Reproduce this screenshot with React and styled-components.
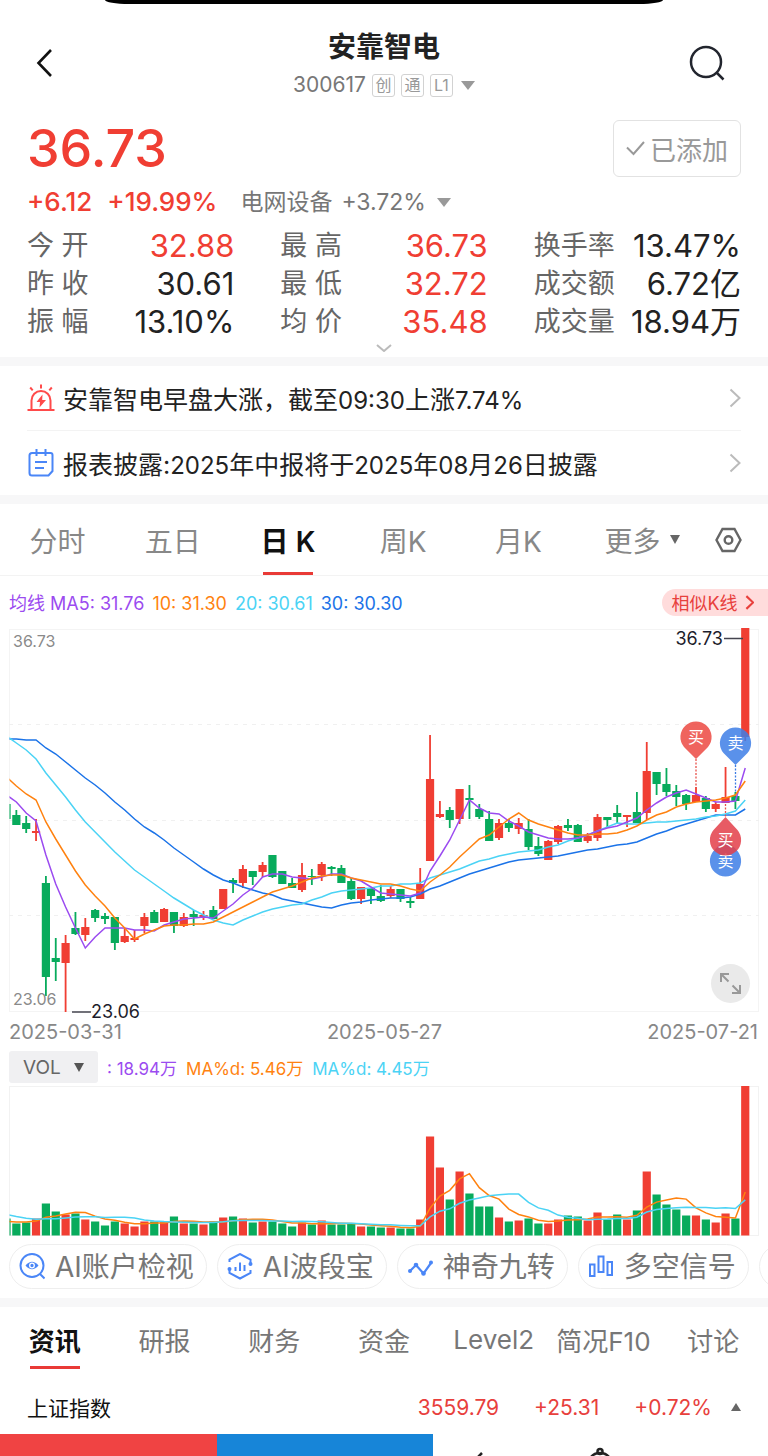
import { Fragment } from "react";
import styled, { createGlobalStyle } from "styled-components";

const RED = "#f03e33";
const GREEN = "#08ab5c";
const PURPLE = "#9b4bf0";
const ORANGE = "#ff8210";
const CYAN = "#4bd3f5";
const BLUE = "#1b73e8";

const GlobalStyle = createGlobalStyle`
    * {
        box-sizing: border-box;
    }
    body {
        margin: 0;
        background: #fff;
        color: #222;
        font-family: Inter, "Noto Sans CJK SC", sans-serif;
        overflow-x: hidden;
    }
    button, select {
        margin: 0;
        padding: 0;
        border: 0;
        background: none;
        color: inherit;
        font: inherit;
        cursor: pointer;
    }
    a {
        color: inherit;
        text-decoration: none;
    }
    svg {
        display: block;
        flex: none;
    }
`;

// [direction, high, body top, body bottom, low, volume]
const candles = [
    ["g", 176, 176, 191, 191, 17],
    ["g", 182, 187, 197, 197, 12],
    ["g", 188, 195, 201, 205, 13],
    ["r", 191, 203, 205, 213, 17],
    ["g", 248, 255, 349, 368, 32],
    ["g", 310, 330, 334, 353, 24],
    ["r", 307, 315, 335, 384, 21],
    ["g", 284, 300, 306, 307, 22],
    ["r", 290, 299, 307, 313, 16],
    ["g", 281, 282, 290, 294, 14],
    ["g", 285, 288, 291, 296, 10],
    ["g", 289, 289, 315, 322, 14],
    ["r", 300, 308, 314, 315, 12],
    ["r", 302, 310, 312, 314, 9],
    ["r", 285, 289, 298, 305, 14],
    ["g", 282, 284, 295, 295, 14],
    ["r", 280, 281, 294, 294, 14],
    ["g", 284, 284, 298, 305, 19],
    ["r", 285, 289, 298, 299, 12],
    ["g", 282, 286, 289, 298, 12],
    ["r", 283, 287, 289, 292, 11],
    ["g", 278, 282, 291, 291, 14],
    ["r", 261, 261, 281, 281, 18],
    ["g", 250, 252, 255, 265, 19],
    ["r", 237, 241, 255, 260, 17],
    ["g", 243, 243, 249, 257, 13],
    ["r", 234, 237, 244, 249, 14],
    ["g", 227, 227, 249, 250, 14],
    ["g", 243, 243, 256, 256, 12],
    ["g", 250, 255, 260, 260, 9],
    ["r", 235, 247, 262, 264, 13],
    ["g", 241, 248, 249, 257, 11],
    ["r", 234, 236, 247, 253, 15],
    ["g", 238, 239, 241, 248, 11],
    ["g", 237, 240, 255, 255, 11],
    ["g", 250, 253, 271, 272, 12],
    ["r", 259, 259, 271, 276, 9],
    ["g", 260, 260, 268, 276, 9],
    ["g", 257, 268, 273, 274, 8],
    ["r", 258, 261, 268, 270, 8],
    ["g", 261, 261, 271, 274, 7],
    ["g", 269, 273, 275, 280, 7],
    ["r", 240, 256, 271, 271, 16],
    ["r", 107, 151, 233, 233, 99],
    ["r", 173, 186, 189, 190, 68],
    ["g", 179, 182, 192, 200, 36],
    ["r", 161, 161, 191, 196, 64],
    ["g", 157, 170, 172, 191, 42],
    ["g", 176, 181, 189, 191, 29],
    ["g", 183, 191, 213, 213, 29],
    ["r", 191, 195, 210, 212, 18],
    ["g", 191, 195, 200, 204, 14],
    ["r", 190, 195, 201, 206, 15],
    ["g", 191, 201, 219, 222, 17],
    ["g", 209, 218, 226, 228, 12],
    ["r", 212, 213, 232, 232, 12],
    ["r", 197, 198, 214, 216, 16],
    ["g", 191, 197, 200, 203, 20],
    ["g", 196, 197, 214, 214, 19],
    ["r", 205, 208, 213, 215, 15],
    ["r", 186, 189, 210, 213, 23],
    ["g", 189, 189, 192, 199, 16],
    ["g", 177, 185, 189, 195, 21],
    ["r", 187, 187, 189, 199, 16],
    ["g", 164, 184, 195, 195, 25],
    ["r", 114, 143, 185, 192, 64],
    ["g", 144, 144, 156, 167, 41],
    ["g", 140, 156, 164, 168, 31],
    ["g", 157, 163, 169, 178, 26],
    ["g", 166, 167, 176, 182, 20],
    ["r", 159, 167, 174, 174, 20],
    ["g", 168, 170, 181, 184, 16],
    ["r", 174, 176, 181, 184, 13],
    ["r", 139, 169, 175, 175, 22],
    ["g", 164, 168, 173, 181, 17],
    ["r", 0, 0, 109, 113, 150]
];

const averages = [
    {
        color: BLUE,
        points: [111, 111, 112, 112, 120, 126, 134, 142, 150, 157, 165, 174, 182, 191, 199, 205, 212, 220, 227, 234, 241, 247, 252, 255, 259, 262, 265, 267, 271, 273, 275, 277, 279, 280, 277, 275, 274, 272, 271, 270, 270, 269, 266, 261, 258, 254, 250, 246, 243, 240, 237, 234, 232, 231, 230, 229, 228, 226, 224, 222, 221, 219, 217, 216, 214, 210, 206, 203, 199, 196, 193, 190, 187, 187, 187, 181]
    },
    {
        color: CYAN,
        points: [108, 115, 122, 131, 145, 157, 169, 182, 194, 204, 214, 224, 233, 242, 249, 256, 263, 270, 276, 282, 287, 292, 295, 297, 292, 288, 284, 281, 279, 277, 276, 272, 269, 265, 263, 262, 261, 260, 258, 258, 256, 256, 255, 250, 247, 244, 241, 237, 233, 231, 228, 226, 224, 223, 222, 219, 217, 213, 210, 207, 203, 199, 195, 196, 196, 195, 194, 194, 193, 192, 191, 189, 188, 186, 183, 172]
    },
    {
        color: PURPLE,
        points: [167, 174, 185, 193, 227, 256, 279, 300, 320, 309, 300, 300, 300, 302, 302, 303, 297, 294, 291, 290, 289, 290, 283, 276, 267, 260, 249, 246, 246, 249, 250, 251, 249, 246, 246, 250, 253, 259, 265, 266, 267, 268, 265, 243, 228, 212, 192, 172, 180, 185, 186, 193, 198, 204, 207, 210, 211, 211, 210, 207, 203, 200, 198, 194, 190, 182, 175, 169, 165, 162, 166, 170, 174, 174, 173, 140]
    },
    {
        color: ORANGE,
        points: [149, 158, 166, 172, 194, 211, 227, 243, 257, 268, 278, 290, 300, 311, 306, 302, 298, 297, 297, 296, 296, 294, 289, 284, 279, 274, 269, 264, 261, 258, 254, 250, 248, 247, 247, 250, 252, 254, 256, 256, 258, 261, 263, 254, 247, 239, 229, 220, 211, 207, 199, 191, 185, 192, 196, 199, 202, 205, 207, 207, 206, 206, 205, 202, 198, 192, 187, 184, 179, 176, 174, 173, 172, 170, 167, 153]
    }
];

// volumes before the visible range, needed by the moving averages
const earlierVolumes = [32, 30, 28, 26, 24, 14, 13, 13, 13];

const stats = [
    { label: "今 开", value: "32.88", up: true },
    { label: "最 高", value: "36.73", up: true },
    { label: "换手率", value: "13.47%" },
    { label: "昨 收", value: "30.61" },
    { label: "最 低", value: "32.72", up: true },
    { label: "成交额", value: "6.72亿" },
    { label: "振 幅", value: "13.10%" },
    { label: "均 价", value: "35.48", up: true },
    { label: "成交量", value: "18.94万" }
];

const periods = ["分时", "五日", "日 K", "周K", "月K"];
const sections = ["资讯", "研报", "财务", "资金", "Level2", "简况F10", "讨论"];

const xAt = i => -2.5 + i * 9.85;
const colorOf = dir => (dir === "r" ? RED : GREEN);
const toPoints = ys => ys.map((y, i) => `${xAt(i)},${y}`).join(" ");

function volumeAverage(size) {
    const all = [...earlierVolumes, ...candles.map(c => c[5])];
    return candles.map((c, i) => {
        const end = i + earlierVolumes.length + 1;
        const sum = all.slice(end - size, end).reduce((a, b) => a + b, 0);
        return 149.5 - sum / size;
    });
}

const Page = styled.div`
    overflow: hidden;
`;

const Notch = styled.div`
    height: 4px;
    margin: 0 105px;
    background: #000;
    border-radius: 0 0 24px 24px / 0 0 4px 4px;
`;

const Header = styled.header`
    display: flex;
    align-items: center;
    justify-content: space-between;
    padding: 25px 36px 0;
`;

const HeaderButton = styled.button`
    display: flex;
    width: 40px;
    height: 40px;
    align-items: center;
    justify-content: center;

    svg {
        overflow: visible;
    }
`;

const Title = styled.h1`
    margin: 0 0 8px;
    font-size: 28px;
    line-height: 36px;
    font-weight: 600;
    text-align: center;
`;

const Code = styled.div`
    display: flex;
    align-items: center;
    justify-content: center;
    gap: 6px;
    color: #777;
    font-size: 21px;
    line-height: 24px;
`;

const Tag = styled.span`
    display: flex;
    width: 23px;
    height: 23px;
    align-items: center;
    justify-content: center;
    border: 1px solid #d2d2d2;
    border-radius: 3px;
    color: #999;
    font-size: 16px;
    line-height: 20px;
`;

const Triangle = styled.span`
    width: 0;
    height: 0;
    margin-left: ${p => p.$gap || 0}px;
    border: ${p => p.$size || 7}px solid transparent;
    border-top: 9px solid ${p => p.$color || "#999"};
    border-bottom: 0;
    ${p => p.$up && `border-top: 0; border-bottom: 8px solid ${p.$color};`}
`;

const Quote = styled.section`
    padding: 23px 27px 5px;
`;

const PriceRow = styled.div`
    display: flex;
    align-items: center;
    justify-content: space-between;
`;

const Price = styled.strong`
    color: ${RED};
    font-size: 52px;
    line-height: 57px;
    font-weight: 500;
`;

const AddedButton = styled.button`
    display: flex;
    height: 57px;
    padding: 0 12px;
    align-items: center;
    gap: 5px;
    border: 1px solid #e2e2e2;
    border-radius: 6px;
    color: #999;
    font-size: 26px;
`;

const ChangeRow = styled.div`
    display: flex;
    align-items: center;
    margin: 11px 0;
    color: ${RED};
    font-size: 26px;
    line-height: 28px;
    font-weight: 500;
    gap: 15px;
`;

const Sector = styled.button`
    display: flex;
    align-items: center;
    gap: 9px;
    margin-left: 8px;
    color: #777;
    font-size: 23px;
    font-weight: 400;
`;

const Stats = styled.dl`
    display: grid;
    grid-template-columns: repeat(3, 1fr);
    column-gap: 46px;
    margin: 0;
`;

const Stat = styled.div`
    display: flex;
    align-items: center;
    justify-content: space-between;
    line-height: 38px;
    white-space: nowrap;

    dt {
        color: #666;
        font-size: 27px;
    }
    dd {
        margin: 0;
        color: ${p => (p.$up ? RED : "#222")};
        font-size: 31px;
    }
`;

const ExpandStats = styled.button`
    display: block;
    margin: 3px auto 0;
`;

const Divider = styled.div`
    height: 9px;
    background: #f7f7f8;
`;

const News = styled.nav`
    padding: 0 27px;
`;

const NewsLink = styled.a`
    display: flex;
    height: 64px;
    align-items: center;
    gap: 8px;
    font-size: 25px;
    white-space: nowrap;

    & + & {
        height: 65px;
        border-top: 1px solid #f3f3f3;
    }
    span {
        flex: 1;
    }
    em {
        font-size: 24px;
        font-style: normal;
    }
`;

const Tabs = styled.nav`
    display: flex;
    height: 72px;
    border-bottom: 1px solid #f3f3f3;
`;

const Tab = styled.button`
    position: relative;
    width: 15%;
    color: ${p => (p.$active ? "#111" : "#888")};
    font-size: 28px;
    font-weight: ${p => (p.$active ? 600 : 400)};

    &::after {
        content: "";
        position: absolute;
        left: 50%;
        bottom: 0;
        width: 50px;
        height: 3px;
        margin-left: -25px;
        background: ${p => (p.$active ? "#e93a36" : "transparent")};
    }
`;

const MoreTab = styled(Tab)`
    display: flex;
    width: auto;
    flex: 1;
    align-items: center;
    justify-content: center;
    gap: 10px;
`;

const SettingsButton = styled.button`
    padding: 0 26px 0 6px;
`;

const Legend = styled.div`
    display: flex;
    height: 52px;
    align-items: center;
    gap: 6px;
    padding-left: 9px;
    font-size: 18px;
    white-space: nowrap;
`;

const LegendValues = styled.div`
    display: flex;
    align-items: baseline;
    gap: 8px;
`;

const Colored = styled.span`
    color: ${p => p.$color};
`;

const SimilarButton = styled.button`
    display: flex;
    height: 27px;
    align-items: center;
    gap: 7px;
    margin-left: auto;
    padding: 0 14px 0 9px;
    border-radius: 14px 0 0 14px;
    background: #ffdcdc;
    color: #e8403c;
`;

const Chart = styled.div`
    position: relative;
    margin: 0 9px;

    svg {
        width: 100%;
        height: auto;
        overflow: visible;
    }
`;

const FullScreen = styled.button`
    position: absolute;
    right: 9px;
    bottom: 9px;
    display: flex;
    width: 39px;
    height: 39px;
    align-items: center;
    justify-content: center;
    border-radius: 50%;
    background: #eaeaea;

    svg {
        width: 23px;
    }
`;

const Dates = styled.div`
    display: flex;
    justify-content: space-between;
    padding: 8px 10px 7px 9px;
    color: #888;
    font-size: 20px;
    line-height: 24px;
`;

const VolumeBar = styled.div`
    display: flex;
    height: 32px;
    align-items: center;
    gap: 9px;
    margin: 0 9px 3px;
    font-size: 17px;
    white-space: nowrap;
`;

const Picker = styled.label`
    display: flex;
    height: 32px;
    align-items: center;
    padding: 0 14px;
    border-radius: 3px;
    background: #f0f0f2;
    color: #666;

    select {
        width: 51px;
        appearance: none;
        font-size: 19px;
    }
`;

const Chips = styled.div`
    display: flex;
    gap: 10px;
    padding: 8px 0 9px 9px;
    overflow: hidden;
`;

const Chip = styled.button`
    display: flex;
    height: 45px;
    flex: none;
    align-items: center;
    gap: 10px;
    padding: 0 12px 0 9px;
    border: 1px solid #eee;
    border-radius: 23px;
    color: #777;
    font-size: 28px;
    line-height: 40px;
    white-space: nowrap;
`;

const SectionTabs = styled.nav`
    display: grid;
    grid-template-columns: repeat(7, 1fr);
    height: 62px;
`;

const SectionTab = styled(Tab)`
    width: auto;
    padding-top: 2px;
    font-size: 26px;
    white-space: nowrap;
    color: ${p => (p.$active ? "#111" : "#777")};
`;

const IndexRow = styled.button`
    display: flex;
    width: 100%;
    height: 65px;
    align-items: center;
    gap: 35px;
    padding: 11px 27px 0;
    color: #e8403c;
    font-size: 21px;

    b {
        margin-right: auto;
        color: #111;
        font-weight: 400;
    }
`;

const IndexPercent = styled.span`
    display: flex;
    align-items: center;
    gap: 19px;
`;

const TradeBar = styled.div`
    display: flex;
    height: 22px;
    overflow: hidden;
`;

const TradeButton = styled.button`
    width: 28.2%;
    background: ${p => p.$color};
`;

const BarIcon = styled.button`
    display: flex;
    width: 15.2%;
    align-items: flex-start;
    justify-content: center;
`;

function Arrow({ color = "#bbb", size = 20, width = 2 }) {
    return (
        <svg width={size / 2 + 2} height={size} viewBox="0 0 12 20" fill="none" stroke={color} strokeWidth={width}>
            <path d="M1.5 1.5 10.5 10 1.5 18.5" />
        </svg>
    );
}

function Pin({ x, y, up, color, children }) {
    const tip = up ? y - 23 : y + 22;
    const edge = up ? y - 10 : y + 10;
    return (
        <g>
            <path
                d={`M${x - 12} ${edge}A15.6 15.6 0 1 ${up ? 0 : 1} ${x + 12} ${edge}L${x} ${tip}Z`}
                fill={color}
                fillOpacity="0.86"
            />
            <text x={x} y={y + 6} fill="#fff" fontSize="16" textAnchor="middle">
                {children}
            </text>
        </g>
    );
}

function KLineChart() {
    return (
        <svg viewBox="0 0 750 384">
            <clipPath id="plot">
                <rect x="0.5" y="0" width="750" height="384" />
            </clipPath>
            <rect x="0.5" y="1.5" width="749" height="382" fill="none" stroke="#f4f4f4" />
            <g stroke="#f0f0f0" strokeDasharray="4 5">
                <path d="M0 96.5H750M0 192.5H750M0 287.5H750" />
            </g>
            <text x="4" y="19" fill="#8a8a8a" fontSize="16">36.73</text>
            <g clipPath="url(#plot)">
                {candles.map(([dir, high, top, bottom, low], i) => (
                    <g key={i} fill={colorOf(dir)}>
                        <rect x={xAt(i) - 0.9} y={high} width="1.8" height={low - high} />
                        <rect x={xAt(i) - 4.1} y={top} width="8.2" height={bottom - top} />
                    </g>
                ))}
                {averages.map(({ color, points }) => (
                    <polyline key={color} points={toPoints(points)} fill="none" stroke={color} strokeWidth="1.5" />
                ))}
            </g>
            <text x="4" y="377" fill="#8a8a8a" fontSize="16">23.06</text>
            <g fill="#1d1d2b" fontSize="18">
                <path d="M63 384H82M715 10.5H734" stroke="#44444f" strokeWidth="1.5" />
                <text x="82" y="390">23.06</text>
                <text x="714" y="17" textAnchor="end">36.73</text>
            </g>
            <g strokeWidth="1.3" strokeDasharray="2 1.5">
                <path d="M687 131V160M716.5 176V189" stroke="#e8524c" />
                <path d="M726.5 137V165" stroke="#3c7ce4" />
            </g>
            <Pin x={687} y={109} color="#ec4b43">买</Pin>
            <Pin x={726.5} y={115} color="#3f7fe6">卖</Pin>
            <Pin x={716.5} y={233} up color="#3f7fe6">卖</Pin>
            <Pin x={716.5} y={212} up color="#e3404a">买</Pin>
        </svg>
    );
}

function VolumeChart() {
    return (
        <svg viewBox="0 0 750 150">
            <rect x="0.5" y="0.5" width="749" height="149" fill="none" stroke="#f2f2f2" />
            <g clipPath="url(#plot)">
                {candles.map(([dir, , , , , volume], i) => (
                    <rect key={i} x={xAt(i) - 4.1} y={149.5 - volume} width="8.2" height={volume} fill={colorOf(dir)} />
                ))}
                <polyline points={toPoints(volumeAverage(5))} fill="none" stroke={ORANGE} strokeWidth="1.5" />
                <polyline points={toPoints(volumeAverage(10))} fill="none" stroke={CYAN} strokeWidth="1.5" />
            </g>
        </svg>
    );
}

function NewsItem({ icon, children }) {
    const parts = children.split(/(\d[\d.:%]*)/);
    return (
        <NewsLink href="#news">
            {icon}
            <span>
                {parts.map((part, i) => (
                    <Fragment key={i}>{i % 2 ? <em>{part}</em> : part}</Fragment>
                ))}
            </span>
            <Arrow />
        </NewsLink>
    );
}

const AlarmIcon = (
    <svg width="28" height="28" viewBox="0 0 28 28" fill="none" stroke="#ff4a4a" strokeWidth="2">
        <path d="M4.5 26V16.5a9.5 9.5 0 0 1 19 0V26M.5 26h27M14 .5V4.5M3.2 3.5l2.5 2.8M24.8 3.5l-2.5 2.8" />
        <path d="M15.5 10.5 9.5 18h3.5L12.5 23.5 19 16h-3.8z" fill="#ff4a4a" stroke="none" />
    </svg>
);

const ReportIcon = (
    <svg width="28" height="28" viewBox="0 0 28 28" fill="none" stroke="#4a86f7" strokeWidth="2">
        <path d="M5 4h18.5a2 2 0 0 1 2 2v16l-4 4.5H5a2.5 2.5 0 0 1-2.5-2.5V6.5A2.5 2.5 0 0 1 5 4zM9.5 0v7M18.5 0v7M8 13h12M8 19h9" />
    </svg>
);

const chips = [
    {
        label: "AI账户检视",
        icon: (
            <>
                <circle cx="13" cy="12.5" r="11.5" />
                <path d="m21 21 4.5 4.5" />
                <path d="M6.5 12.5q6.5-7.5 13 0q-6.5 7.5-13 0z" fill="#4a86f7" stroke="none" />
                <circle cx="13" cy="12.5" r="2.3" fill="#4a86f7" stroke="#fff" strokeWidth="1.3" />
            </>
        )
    },
    {
        label: "AI波段宝",
        icon: (
            <>
                <path d="M2.5 9V6.5L13 1l10.5 5.5V10M23.5 17v3L13 25.5 2.5 20v-3M8.5 18v-4M13 18V9.5M17.5 18v-6" />
                <circle cx="2.5" cy="16" r="2" fill="#4a86f7" stroke="none" />
                <circle cx="23.5" cy="11" r="2" fill="#4a86f7" stroke="none" />
            </>
        )
    },
    {
        label: "神奇九转",
        icon: (
            <>
                <path d="M3 18 9 12 16.5 20.5 24 10" strokeWidth="2.2" />
                <g fill="#4a86f7" stroke="none">
                    <circle cx="3" cy="18" r="2" />
                    <circle cx="9" cy="12" r="2.3" />
                    <circle cx="16.5" cy="20.5" r="2.3" />
                    <circle cx="24" cy="9.5" r="2" />
                </g>
            </>
        )
    },
    {
        label: "多空信号",
        icon: <path d="M2 11.5h4.5v11.5H2zM10.5 3.5H15.5v15.5h-5zM19.5 9H24v13h-4.5z" />
    }
];

export default function App() {
    return (
        <Page>
            <GlobalStyle />
            <Notch />
            <Header>
                <HeaderButton aria-label="返回">
                    <svg width="40" height="40" viewBox="0 0 40 40" fill="none" stroke="#111" strokeWidth="2.6">
                        <path d="M15 7 2.5 20 15 33" />
                    </svg>
                </HeaderButton>
                <div>
                    <Title>安靠智电</Title>
                    <Code>
                        300617
                        <Tag>创</Tag>
                        <Tag>通</Tag>
                        <Tag>L1</Tag>
                        <Triangle $gap={2} />
                    </Code>
                </div>
                <HeaderButton aria-label="搜索">
                    <svg width="40" height="40" viewBox="0 0 40 40" fill="none" stroke="#22252e" strokeWidth="2.5">
                        <circle cx="14" cy="19" r="15" />
                        <path d="m24.5 29.5 7 7" />
                    </svg>
                </HeaderButton>
            </Header>

            <Quote>
                <PriceRow>
                    <Price>36.73</Price>
                    <AddedButton>
                        <svg width="19" height="15" viewBox="0 0 19 15" fill="none" stroke="#999" strokeWidth="2">
                            <path d="m1 6.5 6.5 6.5L18 1" />
                        </svg>
                        已添加
                    </AddedButton>
                </PriceRow>
                <ChangeRow>
                    <span>+6.12</span>
                    <span>+19.99%</span>
                    <Sector>
                        电网设备
                        <span>+3.72%</span>
                        <Triangle $gap={2} />
                    </Sector>
                </ChangeRow>
                <Stats>
                    {stats.map(({ label, value, up }) => (
                        <Stat key={label} $up={up}>
                            <dt>{label}</dt>
                            <dd>{value}</dd>
                        </Stat>
                    ))}
                </Stats>
                <ExpandStats aria-label="展开">
                    <svg width="16" height="8" viewBox="0 0 16 8" fill="none" stroke="#bbb" strokeWidth="2">
                        <path d="m1 1 7 6 7-6" />
                    </svg>
                </ExpandStats>
            </Quote>

            <Divider />
            <News>
                <NewsItem icon={AlarmIcon}>安靠智电早盘大涨，截至09:30上涨7.74%</NewsItem>
                <NewsItem icon={ReportIcon}>报表披露:2025年中报将于2025年08月26日披露</NewsItem>
            </News>
            <Divider />

            <Tabs>
                {periods.map(period => (
                    <Tab key={period} $active={period === "日 K"}>
                        {period}
                    </Tab>
                ))}
                <MoreTab>
                    更多
                    <Triangle $size={5} $color="#666" />
                </MoreTab>
                <SettingsButton aria-label="设置">
                    <svg width="27" height="26" viewBox="0 0 27 26" fill="none" stroke="#666" strokeWidth="2.4">
                        <path d="M7.5 2h12l6 11-6 11h-12l-6-11z" />
                        <circle cx="13.5" cy="13" r="3.8" />
                    </svg>
                </SettingsButton>
            </Tabs>

            <Legend>
                <LegendValues>
                    <Colored $color={PURPLE}>均线 MA5: 31.76</Colored>
                    <Colored $color={ORANGE}>10: 31.30</Colored>
                    <Colored $color={CYAN}>20: 30.61</Colored>
                    <Colored $color={BLUE}>30: 30.30</Colored>
                </LegendValues>
                <SimilarButton>
                    相似K线
                    <Arrow color="#e8403c" size={15} width={2.8} />
                </SimilarButton>
            </Legend>
            <Chart>
                <KLineChart />
                <FullScreen aria-label="全屏">
                    <svg viewBox="0 0 23 23" fill="none" stroke="#999" strokeWidth="2">
                        <path d="M2 10V2h8M2 2l7.5 7.5M21 13v8h-8M21 21l-7.5-7.5" />
                    </svg>
                </FullScreen>
            </Chart>
            <Dates>
                <span>2025-03-31</span>
                <span>2025-05-27</span>
                <span>2025-07-21</span>
            </Dates>
            <VolumeBar>
                <Picker>
                    <select aria-label="指标">
                        <option>VOL</option>
                    </select>
                    <Triangle $size={5} $color="#555" />
                </Picker>
                <Colored $color={PURPLE}>: 18.94万</Colored>
                <Colored $color={ORANGE}>MA%d: 5.46万</Colored>
                <Colored $color={CYAN}>MA%d: 4.45万</Colored>
            </VolumeBar>
            <Chart>
                <VolumeChart />
            </Chart>

            <Chips>
                {chips.map(({ label, icon }) => (
                    <Chip key={label}>
                        <svg width="26" height="27" viewBox="0 0 26 27" fill="none" stroke="#4a86f7" strokeWidth="2">
                            {icon}
                        </svg>
                        {label}
                    </Chip>
                ))}
                <Chip aria-label="更多">
                    <svg width="26" height="27" />
                </Chip>
            </Chips>
            <Divider />

            <SectionTabs>
                {sections.map((section, i) => (
                    <SectionTab key={section} $active={i === 0}>
                        {section}
                    </SectionTab>
                ))}
            </SectionTabs>
            <IndexRow>
                <b>上证指数</b>
                <span>3559.79</span>
                <span>+25.31</span>
                <IndexPercent>
                    +0.72%
                    <Triangle $up $size={5} $color="#666" />
                </IndexPercent>
            </IndexRow>
            <TradeBar>
                <TradeButton aria-label="买入" $color="#f04343" />
                <TradeButton aria-label="卖出" $color="#1785d8" />
                <BarIcon aria-label="分享">
                    <svg width="40" height="22" viewBox="0 0 40 22" fill="none" stroke="#222" strokeWidth="2.5">
                        <path d="m6 24 5-5" />
                    </svg>
                </BarIcon>
                <BarIcon aria-label="提醒">
                    <svg width="40" height="22" viewBox="0 0 40 22" fill="none" stroke="#222" strokeWidth="2.5">
                        <circle cx="12" cy="17.5" r="2.5" />
                        <path d="M3 23q3-4 9-4t9 4" />
                    </svg>
                </BarIcon>
            </TradeBar>
        </Page>
    );
}
